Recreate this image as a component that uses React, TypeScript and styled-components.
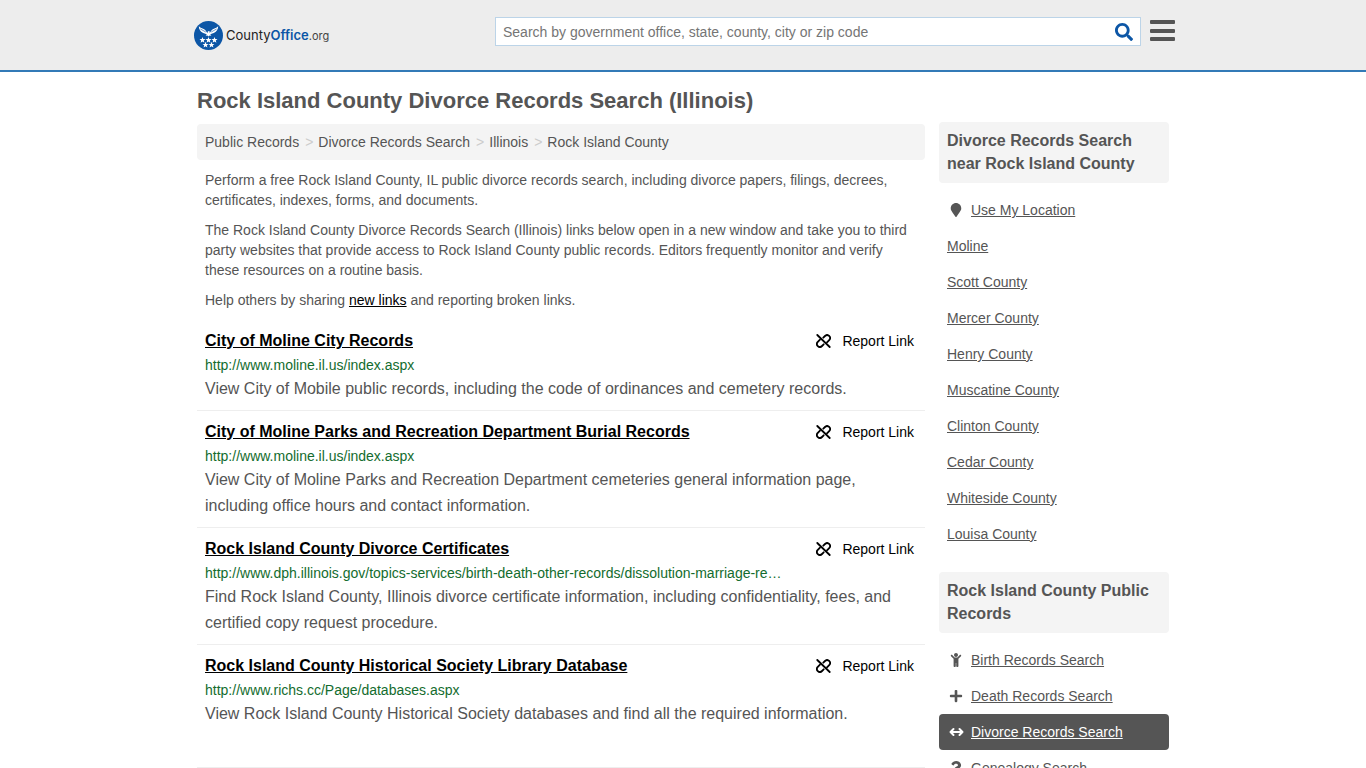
import React from "react";
import styled, { createGlobalStyle } from "styled-components";
import { FaChild, FaMapMarker, FaPlus, FaQuestion, FaSearch } from "react-icons/fa";

const GlobalStyle = createGlobalStyle`
  *, *::before, *::after { box-sizing: border-box; }
  body {
    margin: 0;
    background: #fff;
    color: #555;
    font: 14px/20px "Liberation Sans", Arial, Helvetica, sans-serif;
  }
  h1, h2, h3, p, ul, ol { margin: 0; padding: 0; }
  ul, ol { list-style: none; }
  a { color: inherit; }
`;

const Header = styled.header`
  background: #ededed;
  border-bottom: 2px solid #337ab7;
`;

const HeaderInner = styled.div`
  display: flex;
  align-items: center;
  max-width: 984px;
  height: 70px;
  margin: 0 auto;
  padding: 0 0 0 3px;
`;

const LogoLink = styled.a`
  display: flex;
  align-items: center;
  gap: 3px;
  color: #222;
  font: 13px/20px Inter, "Century Gothic", sans-serif;
  text-decoration: none;

  strong { color: #0c56a6; font-weight: 600; }
  small { color: #444; font-size: 11px; }
`;

const SearchForm = styled.form`
  display: flex;
  flex: 0 1 646px;
  height: 29px;
  margin: 0 9px 8px auto;
  padding-top: 2px;
  background: #fff;
  border: 1px solid #bcd4e8;
`;

const SearchInput = styled.input`
  flex: 1;
  min-width: 0;
  padding: 0 7px;
  background: none;
  border: 0;
  color: #555;
  font: inherit;

  &::placeholder { color: #757575; opacity: 1; }
`;

const IconButton = styled.button`
  display: flex;
  align-items: center;
  justify-content: center;
  padding: 0;
  background: none;
  border: 0;
  cursor: pointer;
`;

const SearchButton = styled(IconButton)`
  width: 32px;
  color: #0c56a6;
`;

const MenuButton = styled(IconButton)`
  margin-bottom: 9px;
  color: #555;
`;

const Page = styled.div`
  display: flex;
  align-items: flex-start;
  gap: 14px;
  max-width: 972px;
  margin: 0 auto;
`;

const Main = styled.main`
  flex: 1;
  min-width: 0;
  padding-top: 15px;
`;

const PageTitle = styled.h1`
  margin-bottom: 9px;
  font-size: 22px;
  line-height: 28px;
`;

const Breadcrumb = styled.ol`
  display: flex;
  flex-wrap: wrap;
  margin-bottom: 10px;
  padding: 8px;
  background: #f4f4f4;
  border-radius: 4px;

  a { text-decoration: none; }
  li + li::before { content: ">"; padding: 0 5px 0 6px; color: #ccc; }
`;

const Intro = styled.div`
  display: grid;
  gap: 10px;
  margin-bottom: 10px;
  padding: 0 8px;

  a { color: #000; }
`;

const Results = styled.ul`
  padding-bottom: 32px;
  border-bottom: 1px solid #eee;
`;

const Result = styled.li`
  padding: 9px 8px 8px;

  & + & { border-top: 1px solid #eee; }
`;

const ResultHead = styled.div`
  display: flex;
  justify-content: space-between;
  margin-bottom: 2px;
  line-height: 24px;
`;

const ResultTitle = styled.h2`
  color: #000;
  font-size: 16px;
`;

const ReportLink = styled.a`
  display: flex;
  align-items: center;
  gap: 11px;
  padding-right: 3px;
  color: #000;
  text-decoration: none;
`;

const ResultUrl = styled.p`
  width: 580px;
  max-width: 100%;
  margin-bottom: 1px;
  overflow: hidden;
  color: #136c2e;
  text-overflow: ellipsis;
  white-space: nowrap;
`;

const ResultText = styled.p`
  font-size: 16px;
  line-height: 26px;
`;

const Sidebar = styled.aside`
  display: grid;
  flex: none;
  gap: 20px;
  width: 230px;
  padding-top: 50px;
`;

const SideTitle = styled.h3`
  margin-bottom: 9px;
  padding: 7px 8px 8px;
  background: #f4f4f4;
  border-radius: 4px;
  font-size: 16px;
  line-height: 23px;
`;

const SideItem = styled.a<{ $active?: boolean }>`
  display: flex;
  align-items: center;
  gap: 6px;
  height: 36px;
  padding: 0 8px;
  background: ${(p) => (p.$active ? "#555" : "transparent")};
  border-radius: 4px;
  color: ${(p) => (p.$active ? "#fff" : "#555")};
`;

const SideIcon = styled.span`
  display: flex;
  justify-content: center;
  width: 18px;
`;

const STAR = "M0-3 .8-.9 3-.9 1.3.5 1.9 2.7 0 1.4-1.9 2.7-1.3.5-3-.9-.8-.9Z";

const LogoMark = () => (
  <svg width="29" height="29" viewBox="0 0 29 29" aria-hidden="true">
    <circle cx="14.5" cy="14.5" r="14.5" fill="#0c56a6" />
    <g fill="#fff">
      <path d="M4.8 5.2C7.4 7.6 10 7.4 11.6 9.6L13.4 12.3 13.8 10.6 15 10 15.8 10.8 15.6 12.3 17.4 9.6C19 7.4 21.6 7.6 24.2 5.2 24 8.2 22.6 10.6 20.2 11.8 18.8 12.6 17.4 12.8 16.2 13.2L17.4 14.8 15.6 14.4 14.5 15.4 13.4 14.4 11.6 14.8 12.8 13.2C11.6 12.8 10.2 12.6 8.8 11.8 6.4 10.6 5 8.2 4.8 5.2Z" />
      {[
        [8.5, 19],
        [14.5, 19],
        [20.5, 19],
        [11.5, 23.8],
        [17.5, 23.8],
      ].map(([x, y]) => (
        <path key={`${x}-${y}`} d={STAR} transform={`translate(${x} ${y})`} />
      ))}
    </g>
    <path d="M6.4 8 11.8 11M22.6 8 17.2 11" stroke="#0c56a6" strokeWidth=".6" fill="none" />
  </svg>
);

const MenuIcon = () => (
  <svg width="25" height="22" viewBox="0 0 25 22" fill="currentColor" aria-hidden="true">
    <rect width="25" height="4" rx="1" />
    <rect y="9" width="25" height="4" rx="1" />
    <rect y="17" width="25" height="4" rx="1" />
  </svg>
);

const BrokenLinkIcon = () => (
  <svg
    width="15"
    height="14"
    viewBox="0 0 15 14"
    fill="none"
    stroke="currentColor"
    strokeWidth="1.8"
    strokeLinecap="round"
    aria-hidden="true"
  >
    <path d="M1.300 1 13.700 13" />
    <path d="M7.300 3.700 9 2A2.900 2.900 0 0 1 13.200 6.100L11 8.400" />
    <path d="M7.700 10.300 6 12A2.900 2.900 0 0 1 1.800 7.900L4 5.600" />
  </svg>
);

const ArrowsIcon = () => (
  <svg
    width="15"
    height="14"
    viewBox="0 0 15 14"
    fill="none"
    stroke="currentColor"
    strokeWidth="2"
    strokeLinecap="round"
    strokeLinejoin="round"
    aria-hidden="true"
  >
    <path d="M1.500 7H13.500M4.500 4 1.500 7 4.500 10M10.500 4 13.500 7 10.500 10" />
  </svg>
);

const crumbs = ["Public Records", "Divorce Records Search", "Illinois", "Rock Island County"];

const results = [
  {
    title: "City of Moline City Records",
    url: "http://www.moline.il.us/index.aspx",
    text: "View City of Mobile public records, including the code of ordinances and cemetery records.",
  },
  {
    title: "City of Moline Parks and Recreation Department Burial Records",
    url: "http://www.moline.il.us/index.aspx",
    text: "View City of Moline Parks and Recreation Department cemeteries general information page, including office hours and contact information.",
  },
  {
    title: "Rock Island County Divorce Certificates",
    url: "http://www.dph.illinois.gov/topics-services/birth-death-other-records/dissolution-marriage-re…",
    text: "Find Rock Island County, Illinois divorce certificate information, including confidentiality, fees, and certified copy request procedure.",
  },
  {
    title: "Rock Island County Historical Society Library Database",
    url: "http://www.richs.cc/Page/databases.aspx",
    text: "View Rock Island County Historical Society databases and find all the required information.",
  },
];

interface SideEntry {
  label: string;
  icon?: React.ReactNode;
  active?: boolean;
}

const nearby: SideEntry[] = [
  { label: "Use My Location", icon: <FaMapMarker size={14} /> },
  { label: "Moline" },
  { label: "Scott County" },
  { label: "Mercer County" },
  { label: "Henry County" },
  { label: "Muscatine County" },
  { label: "Clinton County" },
  { label: "Cedar County" },
  { label: "Whiteside County" },
  { label: "Louisa County" },
];

const records: SideEntry[] = [
  { label: "Birth Records Search", icon: <FaChild size={14} /> },
  { label: "Death Records Search", icon: <FaPlus size={14} /> },
  { label: "Divorce Records Search", icon: <ArrowsIcon />, active: true },
  { label: "Genealogy Search", icon: <FaQuestion size={14} /> },
];

const SideSection = ({ title, entries }: { title: string; entries: SideEntry[] }) => (
  <section>
    <SideTitle>{title}</SideTitle>
    <ul>
      {entries.map(({ label, icon, active }) => (
        <li key={label}>
          <SideItem href="#" $active={active}>
            {icon && <SideIcon>{icon}</SideIcon>}
            <span>{label}</span>
          </SideItem>
        </li>
      ))}
    </ul>
  </section>
);

export default function App() {
  return (
    <>
      <GlobalStyle />
      <Header>
        <HeaderInner>
          <LogoLink href="#">
            <LogoMark />
            <span>
              County<strong>Office</strong>
              <small>.org</small>
            </span>
          </LogoLink>
          <SearchForm role="search">
            <SearchInput
              type="text"
              aria-label="Search"
              placeholder="Search by government office, state, county, city or zip code"
            />
            <SearchButton type="submit" aria-label="Submit search">
              <FaSearch size={18} />
            </SearchButton>
          </SearchForm>
          <MenuButton type="button" aria-label="Menu">
            <MenuIcon />
          </MenuButton>
        </HeaderInner>
      </Header>
      <Page>
        <Main>
          <PageTitle>Rock Island County Divorce Records Search (Illinois)</PageTitle>
          <nav aria-label="Breadcrumb">
            <Breadcrumb>
              {crumbs.map((crumb) => (
                <li key={crumb}>
                  <a href="#">{crumb}</a>
                </li>
              ))}
            </Breadcrumb>
          </nav>
          <Intro>
            <p>
              Perform a free Rock Island County, IL public divorce records search, including divorce
              papers, filings, decrees, certificates, indexes, forms, and documents.
            </p>
            <p>
              The Rock Island County Divorce Records Search (Illinois) links below open in a new
              window and take you to third party websites that provide access to Rock Island County
              public records. Editors frequently monitor and verify these resources on a routine
              basis.
            </p>
            <p>
              Help others by sharing <a href="#">new links</a> and reporting broken links.
            </p>
          </Intro>
          <Results>
            {results.map(({ title, url, text }) => (
              <Result key={title}>
                <ResultHead>
                  <ResultTitle>
                    <a href="#">{title}</a>
                  </ResultTitle>
                  <ReportLink href="#">
                    <BrokenLinkIcon />
                    Report Link
                  </ReportLink>
                </ResultHead>
                <ResultUrl>{url}</ResultUrl>
                <ResultText>{text}</ResultText>
              </Result>
            ))}
          </Results>
        </Main>
        <Sidebar>
          <SideSection title="Divorce Records Search near Rock Island County" entries={nearby} />
          <SideSection title="Rock Island County Public Records" entries={records} />
        </Sidebar>
      </Page>
    </>
  );
}
